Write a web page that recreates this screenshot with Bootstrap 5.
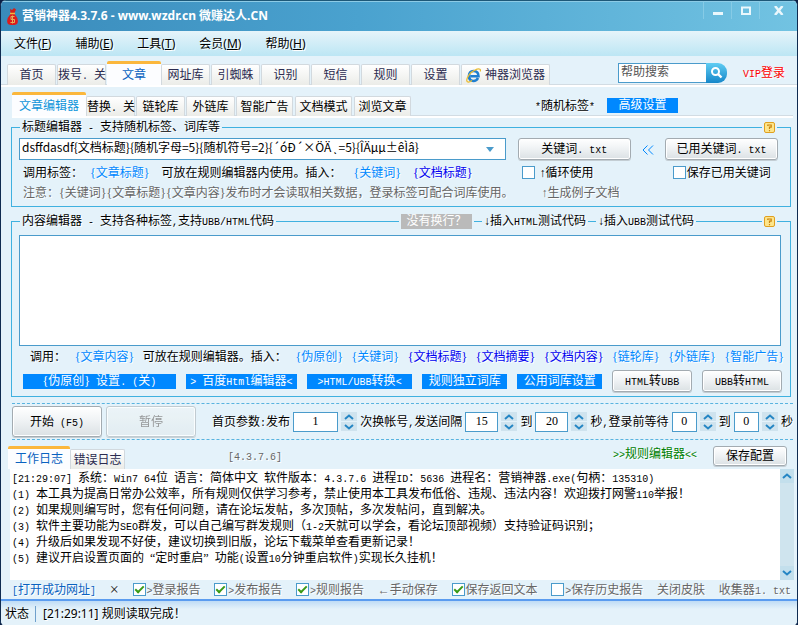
<!DOCTYPE html>
<html lang="zh-CN">
<head>
<meta charset="utf-8">
<meta name="viewport" content="width=device-width, initial-scale=1">
<title>营销神器4.3.7.6</title>
<link href="https://cdn.jsdelivr.net/npm/bootstrap@5.3.0/dist/css/bootstrap.min.css" rel="stylesheet">
<style>
:root{--sky:#e4f2fa;--edge:#3fb1e0;--box:#4a9bcb;--act:#0088ff}
body{background:#0b1f45;font:12px/16px "Liberation Serif","Noto Sans CJK SC",sans-serif;color:#000}
a{text-decoration:none}
button,input,select,textarea{font:inherit;color:#000}
.en{font-family:"Liberation Mono",monospace;font-size:10px;line-height:1;white-space:pre}
.ui{font-family:"Noto Sans","Noto Sans CJK SC",sans-serif}
.app{min-height:100vh;background:var(--sky);border:1px solid #0f2b50;border-width:0 1px 1px 1px;border-radius:6px;overflow:hidden;white-space:nowrap;text-shadow:1px 1px 0 #fff}
.title-bar{height:31px;background:linear-gradient(90deg,#3a8bbb 0,#4aa2cf 45%,#72c3e2 100%);border-top:1px solid #1d5878;box-shadow:inset 0 1px #8ccbe6;color:#fff;font-weight:700;text-shadow:none;padding-left:6px;gap:4px}
.win-btn{width:28px;height:18px;border:0;border-left:1px solid #86cbe6;background:none;padding:0}
.win-btn.last{width:38px}
.win-btn svg{display:block;margin:auto}
.menu-bar{height:25px;padding-left:13px;background:linear-gradient(#e6f4fa,#bce6f4)}
.menu-bar a,.tab{color:#000}
.menu-bar u{text-underline-offset:1px}
.tab-row{border-bottom:2px solid #fff;box-shadow:inset 0 -1px #d2dce3;align-items:flex-end}
.tab{height:20px;border:1px solid #d2d9de;border-bottom:0;border-radius:2px 2px 0 0;background:linear-gradient(#fff,#ebece8);padding:0;text-align:center;text-shadow:none}
.top-tabs{height:31px;padding-left:6px}
.top-tabs .tab{width:49px;margin-right:1px;color:#2b2b50;height:21px}
.top-tabs .tab.on,.tab.on{background:#fcfdff;border:0;border-top:3px solid #fbb73c;color:#0a62c0}
.top-tabs .tab.on{width:54px;height:24px;margin-right:0}
.top-tabs .tab.web{width:89px}
.sub-tabs{height:31px;margin:0 4px 0 11px}
.sub-tabs .tab{width:49px;margin-right:1px}
.sub-tabs .tab.wide{width:57px;margin-right:2px}
.sub-tabs .tab.on{width:74px;height:24px;margin:0;color:#0f95da}
.sub-extra{gap:12px;padding-right:115px}
.find{margin-right:16px}
.find input{width:88px;height:20px;border:1px solid var(--box);border-right:0;padding:0 2px;background:#fff;border-radius:0}
.find input::placeholder{color:#555}
.find button{width:21px;height:20px;border:0;border-radius:0 9px 9px 0;background:linear-gradient(#5fcdf3,#1687c9);padding:0}
.find svg{display:block;margin:auto}
.vip{color:#f00;padding-right:12px}
.flat{background:var(--act);color:#fff;border:0;padding:0;height:15px;line-height:15px;text-shadow:none;border-radius:0}
.flat.muted{background:#bababa;width:71px}
.flat.adv{width:71px}
.group-box{border:1px solid var(--edge);margin:1px 6px 6px 10px}
.group-box+.group-box{margin-top:0}
.group-box legend{float:none;display:flex;align-items:center;width:100%;height:16px;margin:0;font-size:12px;line-height:16px;gap:2px;padding:0}
.rule{height:1px;background:var(--edge);flex:1 1 auto}
.rule.stub{flex:0 0 8px}
.rule.end{flex:0 0 13px}
.rule.mid{flex:0 1 66px}
.help{flex:none}
.btn-xp{border:1px solid #a3abb1;border-radius:3px;background:linear-gradient(#fff,#f0f3f5 45%,#dbe1e4);box-shadow:inset 0 0 0 1px #fff,0 1px #c3cdd3;padding:0;height:22px}
.btn-xp:disabled{color:#888;opacity:.85;background:linear-gradient(#eef5f8,#e2ecf0);border-color:#bcc5ca}
.title-grid{display:grid;grid-template-columns:487fr 113fr 34px 113fr;row-gap:4px;padding:3px 12px 5px 7px;align-items:center}
.title-grid .pair{height:17px}
.pair.wide-gap{gap:12px}
.combo{height:22px;border:1px solid var(--box);background:#fff;width:100%;padding:0 18px 4px 2px;appearance:none;font-family:"Noto Sans CJK SC",sans-serif;line-height:14px}
.arrow{position:absolute;right:16px;top:9px;pointer-events:none}
.tag{color:var(--act)}
.doc{color:#0000f0}
.dim{color:#666}
.ck{appearance:none;width:13px;height:13px;border:1px solid var(--box);background:#fff;margin:0;flex:none;display:inline-grid;place-items:center}
.ck:checked::after{content:"";width:9px;height:5px;border:solid #3a9a17;border-width:0 0 2px 2px;transform:translateY(-1px) rotate(-45deg)}
.body-text{display:block;height:111px;border:1px solid var(--box);background:#fff;width:calc(100% - 16px);margin:6px 9px 0 7px;resize:none;border-radius:0}
.tag-row{padding:2px 6px 0 18px;height:20px}
.tool-row{display:grid;grid-template-columns:151fr 110fr 104fr 84fr 84fr 79fr 79fr;column-gap:10px;padding:4px 8px 4px 11px;align-items:center}
.run-row{border:1px dashed #58b3df;border-width:1px 0;margin:0 4px 6px 11px;height:37px}
.run-row .btn-xp{width:90px;height:31px}
.run-fields{margin-left:12px}
.num{width:33px;height:20px;border:1px solid var(--box);background:#fff;text-align:center;padding:0 2px;border-radius:0}
.num.big{width:45px}.num.slim{width:25px}
.spin{width:16px}
.spin button{display:block;width:16px;height:9px;border:0;padding:0;background:#cfe3ee}
.spin button+button{margin-top:1px}
.spin svg,.log-bar svg{display:block;margin:auto}
.log-tabs{height:23px;padding:0 10px 0 7px}
.log-tabs .tab{width:55px;color:#2b2b50}
.log-tabs .tab.on{width:62px;height:23px;color:#0a62c0}
.log-tabs .btn-xp{width:74px;height:20px}
.version{padding-left:103px}
.green{color:#008000}
.blue{color:#0a62c0}
.log{background:#fff;margin:0 3px 0 9px;height:111px;text-shadow:none}
.log-text{padding:1px 2px}
.log-bar{width:14px;background:#cfe4ee}
.log-bar button{border:0;padding:0;background:#c3dfec;height:14px}
.foot-row{height:19px;padding:0 6px 0 11px}
.foot-row label,.pair{display:flex;align-items:center;gap:1px}
.cross{font-size:16px;color:#222}
.status{border-top:2px solid #5a9cf0;background:linear-gradient(#bfdcf6,var(--sky) 8px);height:27px;padding-left:4px}
.status .sep{border-right:1px solid #6fa0cc;padding-right:6px;margin-right:7px}
</style>
<script src="https://cdn.jsdelivr.net/npm/bootstrap@5.3.0/dist/js/bootstrap.bundle.min.js"></script>
</head>
<body>
<svg width="0" height="0" class="position-absolute" aria-hidden="true">
  <symbol id="up" viewBox="0 0 10 6"><path d="M1 5 5 1.5 9 5" fill="none" stroke="#2586c4" stroke-width="2"/></symbol>
  <symbol id="down" viewBox="0 0 10 6"><path d="M1 1 5 4.5 9 1" fill="none" stroke="#2586c4" stroke-width="2"/></symbol>
  <symbol id="help" viewBox="0 0 11 11"><rect x=".5" y=".5" width="10" height="10" rx="1.5" fill="#fde58a" stroke="#e0a020"/><path d="M3.8 4V3h3.4v2.2H5.5V7M5.5 8v1.2" fill="none" stroke="#c98410" stroke-width="1.2"/></symbol>
</svg>
<div class="app">
  <header class="title-bar ui d-flex align-items-center">
    <svg class="flex-shrink-0" width="11" height="17" viewBox="0 0 11 17"><path d="M3 1 5 2 7 0 9 1.500 7.500 5H3.500Z" fill="#d2201a"/><path d="M3.500 6Q-1 11 .5 15 1 17 5.500 17T10.500 15Q12 11 7.500 6Z" fill="#dd1c1c"/><path d="M3 5.500h5" stroke="#f0b840" stroke-width="1.500"/><path d="M7.500 8.500H4v3h3.500v3H3.500M5.500 7.500v8" fill="none" stroke="#e4b05a" stroke-width="1"/></svg>
    <span>营销神器4.3.7.6 - www.wzdr.cn 微赚达人.CN</span>
    <div class="d-flex ms-auto align-self-start">
      <button class="win-btn" aria-label="最小化"><svg width="10" height="10"><path d="M0 8.500h10" stroke="#eaf7fc" stroke-width="3"/></svg></button>
      <button class="win-btn" aria-label="最大化"><svg width="10" height="9"><path d="M1 1.500h8v6.500H1Z" fill="none" stroke="#eaf7fc" stroke-width="2"/></svg></button>
      <button class="win-btn last" aria-label="关闭"><svg width="10" height="9"><path d="M1 0 8.500 9M8.500 0 1 9" stroke="#eaf7fc" stroke-width="2.500"/></svg></button>
    </div>
  </header>
  <nav class="menu-bar ui d-flex align-items-center gap-4">
    <a href="#">文件(<u>F</u>)</a><a href="#">辅助(<u>E</u>)</a><a href="#">工具(<u>T</u>)</a><a href="#">会员(<u>M</u>)</a><a href="#">帮助(<u>H</u>)</a>
  </nav>

  <div class="d-flex tab-row top-tabs">
    <div class="d-flex align-items-end">
      <button class="tab">首页</button><button class="tab">拨号<span class="en">. </span>关</button><button class="tab on">文章</button><button class="tab">网址库</button><button class="tab">引蜘蛛</button><button class="tab">识别</button><button class="tab">短信</button><button class="tab">规则</button><button class="tab">设置</button>
      <button class="tab web d-flex align-items-center justify-content-center gap-1"><svg width="15" height="15" viewBox="0 0 15 15"><path d="M12 10Q10.500 13 7.500 13 3 13 3 8T7.500 3Q12.500 3 12.500 8.200H4.500" fill="none" stroke="#1f7fd0" stroke-width="2.600"/><path d="M14.500 3.500Q15 0 11 1.200 4 4 1.500 9.500-.5 14.500 3 14 4.500 13.500 6 12.500" fill="none" stroke="#e9bd35" stroke-width="1.300"/></svg>神器浏览器</button>
    </div>
    <form class="find d-flex align-self-center ms-auto pt-1"><input type="text" placeholder="帮助搜索" aria-label="帮助搜索"><button type="button" aria-label="搜索"><svg width="13" height="13" viewBox="0 0 13 13"><circle cx="5.500" cy="5.500" r="3.500" fill="none" stroke="#fff" stroke-width="2"/><path d="m8 8 3.500 3.500" stroke="#fff" stroke-width="2.400"/></svg></button></form>
    <a href="#" class="vip align-self-center pt-1"><span class="en">VIP</span>登录</a>
  </div>

  <div class="d-flex tab-row sub-tabs">
    <button class="tab on">文章编辑器</button><button class="tab">替换<span class="en">. </span>关</button><button class="tab">链轮库</button><button class="tab">外链库</button><button class="tab wide">智能广告</button><button class="tab wide">文档模式</button><button class="tab wide">浏览文章</button>
    <div class="sub-extra d-flex align-items-center ms-auto align-self-center pt-2"><a href="#" class="text-black"><span class="en">*</span>随机标签<span class="en">*</span></a><button class="flat adv">高级设置</button></div>
  </div>

  <fieldset class="group-box">
    <legend><span class="rule stub"></span><span>标题编辑器<span class="en"> - </span>支持随机标签、词库等</span><span class="rule"></span><svg class="help" width="11" height="11"><use href="#help"/></svg><span class="rule end"></span></legend>
    <div class="title-grid">
      <div class="position-relative me-2 pe-1"><select class="combo" aria-label="标题"><option>dsffdasdf{文档标题}{随机字母=5}{随机符号=2}{´óÐ´×ÖÄ¸=5}{ÎÄµµ±êÌâ}</option></select><svg class="arrow" width="8" height="5"><path d="M0 0h8L4 5Z" fill="#4a9bcb"/></svg></div>
      <button class="btn-xp">关键词<span class="en">. txt</span></button><a href="#" class="tag text-center" aria-label="移到左侧"><svg width="12" height="10"><path d="M5.500.5 1 5l4.500 4.500M11 .5 6.500 5 11 9.500" fill="none" stroke="#0088ff"/></svg></a><button class="btn-xp">已用关键词<span class="en">. txt</span></button>
      <div class="pair wide-gap px-1"><span>调用标签： <a href="#" class="tag ms-1">{文章标题}</a></span><span>可放在规则编辑器内使用。插入：</span><a href="#" class="tag">{关键词}</a><a href="#" class="doc">{文档标题}</a></div>
      <label class="pair px-1"><input type="checkbox" class="ck"><span class="ps-1">↑循环使用</span></label><span></span>
      <label class="pair ps-2"><input type="checkbox" class="ck"><span>保存已用关键词</span></label>
      <span class="dim px-1">注意：{关键词}{文章标题}{文章内容}发布时才会读取相关数据，登录标签可配合词库使用。</span>
      <a href="#" class="dim ps-4">↑生成例子文档</a>
    </div>
  </fieldset>

  <fieldset class="group-box">
    <legend><span class="rule stub"></span><span>内容编辑器<span class="en"> - </span>支持各种标签<span class="en">,</span>支持<span class="en">UBB/HTML</span>代码</span><span class="rule"></span><button class="flat muted">没有换行？</button><span class="rule stub"></span><a href="#" class="text-black">↓插入<span class="en">HTML</span>测试代码</a><span class="rule stub"></span><a href="#" class="text-black">↓插入<span class="en">UBB</span>测试代码</a><span class="rule mid"></span><svg class="help" width="11" height="11"><use href="#help"/></svg><span class="rule end"></span></legend>
    <textarea class="body-text" aria-label="内容"></textarea>
    <div class="tag-row d-flex align-items-center justify-content-between"><span>调用：</span><a href="#" class="tag">{文章内容}</a><span>可放在规则编辑器。插入：</span><a href="#" class="tag">{伪原创}</a><a href="#" class="tag">{关键词}</a><a href="#" class="doc">{文档标题}</a><a href="#" class="doc">{文档摘要}</a><a href="#" class="doc">{文档内容}</a><a href="#" class="tag">{链轮库}</a><a href="#" class="tag">{外链库}</a><a href="#" class="tag">{智能广告}</a></div>
    <div class="tool-row">
      <button class="flat">{伪原创}<span class="en"> </span>设置<span class="en">. (</span>关<span class="en">)</span></button><button class="flat"><span class="en">&gt; </span>百度<span class="en">Html</span>编辑器<span class="en">&lt;</span></button><button class="flat"><span class="en">&gt;HTML/UBB</span>转换<span class="en">&lt;</span></button><button class="flat">规则独立词库</button><button class="flat">公用词库设置</button><button class="btn-xp"><span class="en">HTML</span>转<span class="en">UBB</span></button><button class="btn-xp"><span class="en">UBB</span>转<span class="en">HTML</span></button>
    </div>
  </fieldset>

  <div class="run-row d-flex align-items-center gap-1">
    <button class="btn-xp">开始<span class="en"> (F5)</span></button><button class="btn-xp" disabled>暂停</button>
    <div class="run-fields d-flex align-items-center justify-content-between flex-grow-1">
      <label for="n1">首页参数<span class="en">:</span>发布</label><input id="n1" class="num big" value="1"><span class="spin"><button aria-label="加"><svg width="10" height="6"><use href="#up"/></svg></button><button aria-label="减"><svg width="10" height="6"><use href="#down"/></svg></button></span>
      <label for="n2">次换帐号<span class="en">,</span>发送间隔</label><input id="n2" class="num" value="15"><span class="spin"><button aria-label="加"><svg width="10" height="6"><use href="#up"/></svg></button><button aria-label="减"><svg width="10" height="6"><use href="#down"/></svg></button></span>
      <label for="n3">到</label><input id="n3" class="num" value="20"><span class="spin"><button aria-label="加"><svg width="10" height="6"><use href="#up"/></svg></button><button aria-label="减"><svg width="10" height="6"><use href="#down"/></svg></button></span>
      <label for="n4">秒<span class="en">,</span>登录前等待</label><input id="n4" class="num slim" value="0"><span class="spin"><button aria-label="加"><svg width="10" height="6"><use href="#up"/></svg></button><button aria-label="减"><svg width="10" height="6"><use href="#down"/></svg></button></span>
      <label for="n5">到</label><input id="n5" class="num slim" value="0"><span class="spin"><button aria-label="加"><svg width="10" height="6"><use href="#up"/></svg></button><button aria-label="减"><svg width="10" height="6"><use href="#down"/></svg></button></span>
      <span>秒</span>
    </div>
  </div>

  <div class="log-tabs d-flex align-items-end">
    <button class="tab on">工作日志</button><button class="tab">错误日志</button>
    <span class="version en dim align-self-center">[4.3.7.6]</span>
    <a href="#" class="green ms-auto me-3 align-self-start"><span class="en">&gt;&gt;</span>规则编辑器<span class="en">&lt;&lt;</span></a>
    <button class="btn-xp align-self-start">保存配置</button>
  </div>
  <div class="log d-flex">
    <div class="log-text flex-grow-1 overflow-hidden">
      <div><span class="en">[21:29:07] </span>系统：<span class="en">Win7 64</span>位<span class="en"> </span>语言：简体中文<span class="en"> </span>软件版本：<span class="en">4.3.7.6 </span>进程<span class="en">ID</span>：<span class="en">5636 </span>进程名：营销神器<span class="en">.exe(</span>句柄：<span class="en">135310)</span></div>
      <div><span class="en">(1) </span>本工具为提高日常办公效率，所有规则仅供学习参考，禁止使用本工具发布低俗、违规、违法内容！欢迎拨打网警<span class="en">110</span>举报！</div>
      <div><span class="en">(2) </span>如果规则编写时，您有任何问题，请在论坛发帖，多次顶帖，多次发帖问，直到解决。</div>
      <div><span class="en">(3) </span>软件主要功能为<span class="en">SEO</span>群发，可以自己编写群发规则（<span class="en">1-2</span>天就可以学会，看论坛顶部视频）支持验证码识别；</div>
      <div><span class="en">(4) </span>升级后如果发现不好使，建议切换到旧版，论坛下载菜单查看更新记录！</div>
      <div><span class="en">(5) </span>建议开启设置页面的<span class="en"> </span>“定时重启”<span class="en"> </span>功能<span class="en">(</span>设置<span class="en">10</span>分钟重启软件<span class="en">)</span>实现长久挂机！</div>
    </div>
    <div class="log-bar d-flex flex-column justify-content-between"><button aria-label="向上"><svg width="10" height="6"><use href="#up"/></svg></button><button aria-label="向下"><svg width="10" height="6"><use href="#down"/></svg></button></div>
  </div>
  <div class="foot-row dim d-flex align-items-center justify-content-between">
    <a href="#" class="blue"><span class="en">[</span>打开成功网址<span class="en">]</span></a><a href="#" class="cross">×</a>
    <label><input type="checkbox" class="ck" checked><span><span class="en">&gt;</span>登录报告</span></label>
    <label><input type="checkbox" class="ck" checked><span><span class="en">&gt;</span>发布报告</span></label>
    <label><input type="checkbox" class="ck" checked><span><span class="en">&gt;</span>规则报告</span></label>
    <a href="#" class="dim">←手动保存</a>
    <label><input type="checkbox" class="ck" checked><span>保存返回文本</span></label>
    <label><input type="checkbox" class="ck"><span><span class="en">&gt;</span>保存历史报告</span></label>
    <a href="#" class="dim">关闭皮肤</a><a href="#" class="dim">收集器<span class="en">1. txt</span></a>
  </div>
  <footer class="status ui d-flex align-items-center"><span class="sep">状态</span><span>[21:29:11] 规则读取完成！</span></footer>
</div>
</body>
</html>
